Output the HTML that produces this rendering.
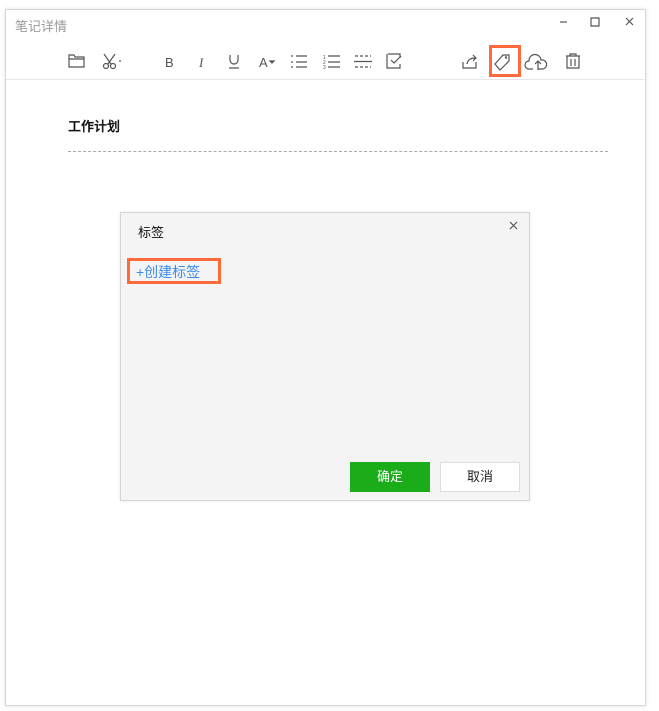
<!DOCTYPE html>
<html><head><meta charset="utf-8"><style>
body{margin:0;width:659px;height:711px;background:#fff;position:relative;overflow:hidden;font-family:"Liberation Sans","Noto Sans CJK SC",sans-serif}
.win{position:absolute;left:5px;top:9px;width:639px;height:695px;border:1px solid #d6d6d6;box-shadow:0 0 4px rgba(0,0,0,.12);background:#fff}
.ab{position:absolute}
svg{position:absolute;overflow:visible}
.ic{fill:none;stroke:#555;stroke-width:1.2}
</style></head><body>
<div class="win"></div>
<div class="ab" style="left:15px;top:16px;font-size:13px;color:#999">笔记详情</div>
<svg style="left:560px;top:14px" width="80" height="16" class="ic"><path d="M0 8h7"/><path d="M31 4h8v8h-8z"/><path d="M66 4l7 7M73 4l-7 7"/></svg>
<div class="ab" style="left:6px;top:79px;width:638px;height:1px;background:#e6e6e6"></div>
<svg style="left:0;top:0" width="659" height="80" class="ic">
<path d="M69 55h5l1 2h9v10h-15z M69 59h15"/>
<circle cx="106" cy="66" r="2.5"/><circle cx="113" cy="66" r="2.5"/><path d="M104 54l7 10M115 54l-7 10"/><path d="M119 61l2 0"/>
<text x="165" y="67" font-size="13" fill="#555" stroke="none" font-family="Liberation Sans">B</text>
<text x="199" y="67" font-size="13" fill="#555" stroke="none" font-style="italic" font-family="Liberation Serif">I</text>
<path d="M230 55v5a4 4 0 0 0 8 0v-5M229 68h10"/>
<text x="259" y="67" font-size="13" fill="#555" stroke="none">A</text><path d="M270 61h4l-2 2z" fill="#555"/>
<path d="M291 56h2M291 62h2M291 67h2M296 56h11M296 62h11M296 67h11"/>
<text x="323" y="59" font-size="5" fill="#555" stroke="none">1</text><text x="323" y="64" font-size="5" fill="#555" stroke="none">2</text><text x="323" y="69" font-size="5" fill="#555" stroke="none">3</text>
<path d="M328 56h12M328 62h12M328 67h12"/>
<path d="M355 56h16M355 67h16" stroke-dasharray="3 2"/><path d="M354 61.5h18"/>
<path d="M388 54h12v4M400 64v4h-13v-14" /><path d="M391 60l3 3 7-7"/>
<path d="M463 62v6h13v-6M467 64c1-5 4-6 9-6M473 55l3 3-3 3"/>
<path d="M495 64l8-9h6v6l-9 9z"/><circle cx="506" cy="57.5" r=".6"/>
<path d="M533 69h-4a4 4 0 0 1 0-8a6 6 0 0 1 12-1a4.5 4.5 0 0 1 2 9h-5M538 70v-9M535 64l3-3 3 3"/>
<path d="M566 56h14M570 56v-2h6v2M567 56v12h12v-12M571 59v7M575 59v7"/>
</svg>
<div class="ab" style="left:489px;top:45px;width:26px;height:26px;border:3px solid #ff6a3d"></div>
<div class="ab" style="left:68px;top:116px;font-size:13px;color:#111;font-weight:500;-webkit-text-stroke:0.3px #111">工作计划</div>
<div class="ab" style="left:68px;top:151px;width:540px;border-top:1px dashed #aaa"></div>
<div class="ab" style="left:120px;top:212px;width:408px;height:287px;background:#f4f4f4;border:1px solid #d4d4d4;box-shadow:0 0 3px rgba(0,0,0,.1)"></div>
<div class="ab" style="left:138px;top:222px;font-size:13px;color:#111">标签</div>
<svg style="left:510px;top:222px" width="8" height="8" class="ic" stroke="#666"><path d="M0 0l7 7M7 0l-7 7"/></svg>
<div class="ab" style="left:127px;top:258px;width:88px;height:20px;border:3px solid #ff6a3d"></div>
<div class="ab" style="left:136px;top:262px;font-size:14px;color:#3b8cf0">+创建标签</div>
<div class="ab" style="left:350px;top:462px;width:80px;height:30px;background:#1aad19;color:#fff;font-size:13px;text-align:center;line-height:30px">确定</div>
<div class="ab" style="left:440px;top:462px;width:78px;height:28px;background:#fff;border:1px solid #ddd;color:#222;font-size:13px;text-align:center;line-height:28px">取消</div>
</body></html>
